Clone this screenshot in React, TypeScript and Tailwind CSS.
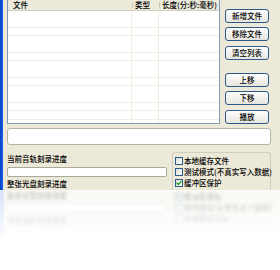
import React from 'react'

const BUTTONS: { label: string; mt: string }[] = [
  { label: '新增文件', mt: 'mt-[9px]' },
  { label: '移除文件', mt: 'mt-[4px]' },
  { label: '清空列表', mt: 'mt-[5px]' },
  { label: '上移', mt: 'mt-[13px]' },
  { label: '下移', mt: 'mt-[4px]' },
  { label: '播放', mt: 'mt-[5px]' },
]

const OPTIONS: { label: string; checked: boolean }[] = [
  { label: '本地缓存文件', checked: false },
  { label: '测试模式(不真实写入数据)', checked: false },
  { label: '缓冲区保护', checked: true },
]

function XpButton({ label, className }: { label: string; className: string }) {
  return (
    <div
      className={`${className} h-[14px] w-[44px] rounded-[3px] border border-[#2D5A8C] bg-linear-to-b from-white to-[#E6E5DE] flex items-center justify-center text-black`}
    >
      {label}
    </div>
  )
}

function CheckBox({ checked }: { checked: boolean }) {
  return (
    <div className="w-[8px] h-[8px] border border-[#2A5B8D] bg-linear-to-br from-[#DCDCD6] to-white flex items-center justify-center shrink-0">
      {checked && (
        <svg width="6" height="6" viewBox="0 0 6 6">
          <path d="M0.6 2.8 L2.3 4.5 L5.4 1.2" fill="none" stroke="#21A121" strokeWidth="1.3" />
        </svg>
      )}
    </div>
  )
}

function BottomSection() {
  return (
    <div className="flex h-[45px] pl-[4px]">
      <div className="w-[160px] flex flex-col">
        <div className="mt-[10px] h-[8px] leading-[8px]">当前音轨刻录进度</div>
        <div className="mt-[4px] h-[10px] rounded-[2px] border border-[#A9A99C] bg-white" />
        <div className="mt-[3px] h-[8px] leading-[8px]">整张光盘刻录进度</div>
      </div>
      <div className="ml-[5px] mt-[7px] w-[99px] rounded-t-[3px] border border-b-0 border-[#D0CFC2] flex flex-col pl-[2px] pt-[4px] gap-[3px]">
        {OPTIONS.map(opt => (
          <div key={opt.label} className="flex items-center gap-[1px] h-[8px]">
            <CheckBox checked={opt.checked} />
            <span className="leading-[8px] whitespace-nowrap">{opt.label}</span>
          </div>
        ))}
      </div>
    </div>
  )
}

function FileList() {
  return (
    <div className="w-[213px] h-[124px] border border-t-0 border-[#7F9DB9] bg-white flex flex-col">
      <div className="h-[11px] flex bg-[#EBEADB] border-b border-[#D2CFBF] shrink-0">
        <div className="w-[124px] pl-[5px] flex items-center">文件</div>
        <div className="w-px my-[2px] bg-[#C7C5B2]" />
        <div className="w-[26px] pl-[2px] flex items-center">类型</div>
        <div className="w-px my-[2px] bg-[#C7C5B2]" />
        <div className="flex-1 pl-[2px] flex items-center whitespace-nowrap">长度(分:秒:毫秒)</div>
      </div>
      <div className="flex-1 flex bg-[repeating-linear-gradient(to_bottom,transparent_0px,transparent_7.5px,#F0EEE2_7.5px,#F0EEE2_8.35px)]">
        <div className="w-[124px] border-r border-[#F0EEE2]" />
        <div className="w-[27px] border-r border-[#F0EEE2]" />
        <div className="flex-1" />
      </div>
    </div>
  )
}

export default function App() {
  return (
    <div className="w-[280px] h-[270px] overflow-hidden bg-white text-[7.5px] font-medium text-black font-['Noto_Sans_CJK_SC','Noto_Sans',sans-serif]">
      <div className="h-[190px] flex">
        <div className="w-[3px] bg-linear-to-r from-[#0842C8] to-[#1A5FE6]" />
        <div className="flex-1 bg-[#ECE9D8] flex flex-col overflow-hidden">
          <div className="flex pl-[4px]">
            <FileList />
            <div className="ml-[5px] flex flex-col">
              {BUTTONS.map(b => <XpButton key={b.label} label={b.label} className={b.mt} />)}
            </div>
          </div>
          <div className="ml-[4px] mt-[4px] w-[264px] h-[17px] rounded-[3px] border border-[#B5B4A6] bg-white" />
          <BottomSection />
        </div>
      </div>
      <div className="h-[80px] relative overflow-hidden">
        <div className="flex -scale-y-100 opacity-30 blur-[1.5px]">
          <div className="w-[3px] bg-[#1A5FE6]" />
          <div className="flex-1 bg-[#ECE9D8]">
            <BottomSection />
          </div>
        </div>
        <div className="absolute inset-0 bg-linear-to-b from-white/10 via-white/80 via-50% to-white" />
      </div>
    </div>
  )
}
